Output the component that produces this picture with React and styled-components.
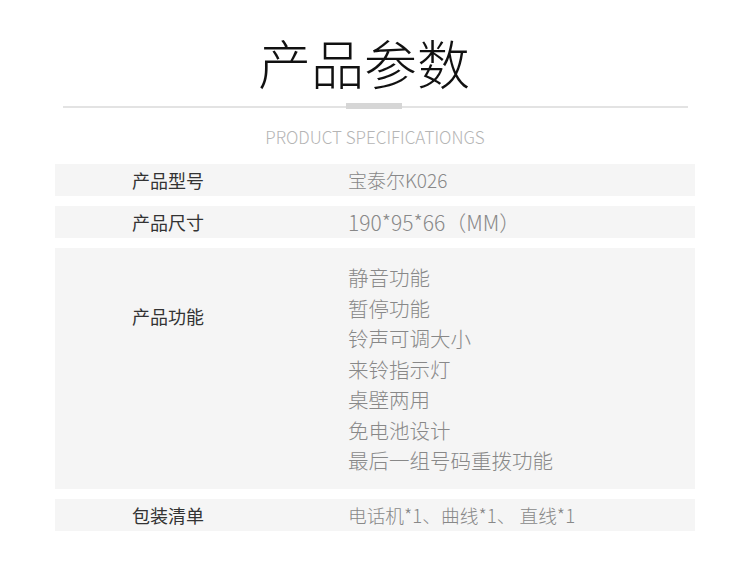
import React from "react";
import styled, { createGlobalStyle } from "styled-components";

const Global = createGlobalStyle`
  html, body { margin: 0; padding: 0; background: #fff; }
  body { font-family: "Noto Sans CJK SC", "Noto Sans", sans-serif; }
`;

const Page = styled.div`
  width: 750px;
  padding-top: 25px;
  display: flex;
  flex-direction: column;
  align-items: center;
`;

const Title = styled.h1`
  margin: 0 22px 0 0;
  font-size: 53px;
  line-height: 74px;
  font-weight: 300;
  color: #111;
`;

const Divider = styled.div`
  position: relative;
  width: 625px;
  height: 2px;
  background: #e3e3e3;
  margin-top: 7px;
  margin-left: 1px;
  &::after {
    content: "";
    position: absolute;
    left: 283px;
    top: -3px;
    width: 56px;
    height: 6px;
    background: #d6d6d6;
  }
`;

const Subtitle = styled.div`
  margin-top: 18px;
  font-size: 17px;
  line-height: 22px;
  font-weight: 300;
  color: #b5b5b5;
`;

const Table = styled.div`
  margin-top: 16px;
  width: 640px;
  display: flex;
  flex-direction: column;
  gap: 10px;
`;

const Row = styled.div`
  display: grid;
  grid-template-columns: 216px 1fr;
  padding-left: 77px;
  background: #f5f5f5;
  padding-top: ${(p) => (p.$tall ? "14px" : "0")};
  padding-bottom: ${(p) => (p.$tall ? "13px" : "0")};
`;

const Label = styled.div`
  font-size: 18px;
  line-height: 32px;
  color: #333;
  padding-top: ${(p) => p.$offset || 0}px;
`;

const Value = styled.div`
  font-size: ${(p) => p.$size || 20}px;
  line-height: 32px;
  color: #888;
  font-weight: 300;
  white-space: pre;
`;

const List = styled.div`
  display: flex;
  flex-direction: column;
`;

const Item = styled.div`
  font-size: 20.5px;
  line-height: 30.5px;
  color: #888;
  font-weight: 300;
`;

const features = [
  "静音功能",
  "暂停功能",
  "铃声可调大小",
  "来铃指示灯",
  "桌壁两用",
  "免电池设计",
  "最后一组号码重拨功能",
];

export default function App() {
  return (
    <>
      <Global />
      <Page>
        <Title>产品参数</Title>
        <Divider />
        <Subtitle>PRODUCT SPECIFICATIONGS</Subtitle>
        <Table>
          <Row>
            <Label>产品型号</Label>
            <Value $size={19}>宝泰尔K026</Value>
          </Row>
          <Row>
            <Label>产品尺寸</Label>
            <Value $size={21}>190*95*66（MM）</Value>
          </Row>
          <Row $tall>
            <Label $offset={38}>产品功能</Label>
            <List>
              {features.map((f) => (
                <Item key={f}>{f}</Item>
              ))}
            </List>
          </Row>
          <Row>
            <Label>包装清单</Label>
            <Value $size={18.7}>电话机*1、曲线*1、 直线*1</Value>
          </Row>
        </Table>
      </Page>
    </>
  );
}
